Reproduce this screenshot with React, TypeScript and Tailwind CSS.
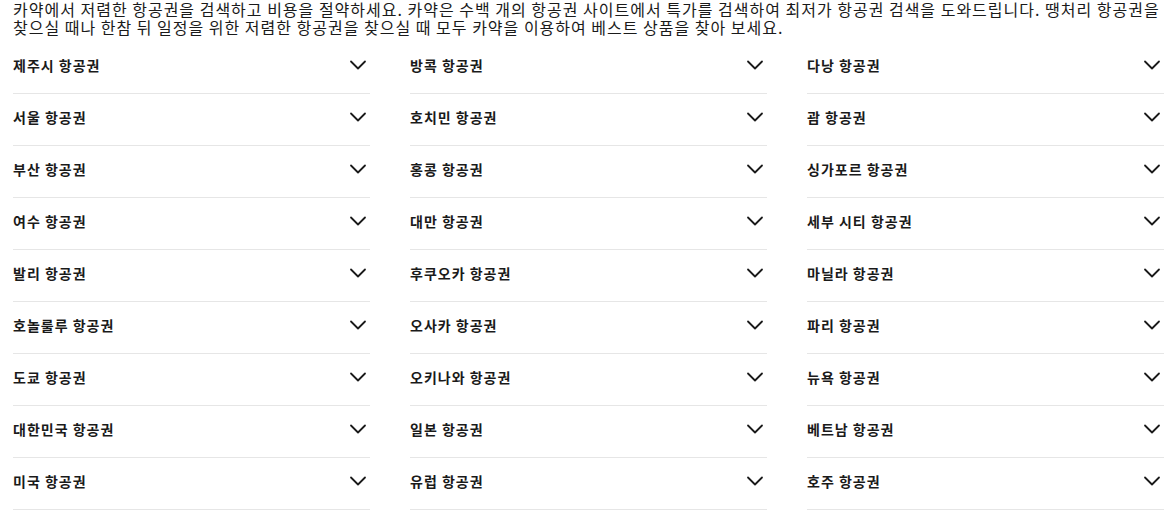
const columns: string[][] = [
  ['제주시 항공권', '서울 항공권', '부산 항공권', '여수 항공권', '발리 항공권', '호놀룰루 항공권', '도쿄 항공권', '대한민국 항공권', '미국 항공권'],
  ['방콕 항공권', '호치민 항공권', '홍콩 항공권', '대만 항공권', '후쿠오카 항공권', '오사카 항공권', '오키나와 항공권', '일본 항공권', '유럽 항공권'],
  ['다낭 항공권', '괌 항공권', '싱가포르 항공권', '세부 시티 항공권', '마닐라 항공권', '파리 항공권', '뉴욕 항공권', '베트남 항공권', '호주 항공권'],
];

const Chevron = () => (
  <svg width="20" height="12" viewBox="0 0 20 12" fill="none" className="shrink-0">
    <path d="M3 2.5l7 7 7-7" stroke="#1a1a1a" strokeWidth="1.8" strokeLinecap="round" strokeLinejoin="round" />
  </svg>
);

export default function App() {
  return (
    <div
      className="w-[1173px] h-[522px] overflow-hidden bg-white pl-[13px] pr-[10px] text-[#1a1a1a]"
      style={{ fontFamily: '"Noto Sans CJK KR", "Noto Sans", sans-serif' }}
    >
      <p className="text-[16px] leading-[18px] tracking-[1px]">
        카약에서 저렴한 항공권을 검색하고 비용을 절약하세요. 카약은 수백 개의 항공권 사이트에서 특가를 검색하여 최저가 항공권 검색을 도와드립니다. 땡처리 항공권을 찾으실 때나 한참 뒤 일정을 위한 저렴한 항공권을 찾으실 때 모두 카약을 이용하여 베스트 상품을 찾아 보세요.
      </p>
      <div className="mt-[6px] grid grid-cols-3 gap-x-[40px] w-[1151px]">
        {columns.map((col, i) => (
          <div key={i} className="flex flex-col">
            {col.map((label) => (
              <div
                key={label}
                className="h-[52px] flex items-center justify-between border-b border-[#e6e6e6] pr-[2px] pb-[5px]"
              >
                <span className="text-[14px] font-bold leading-[20px] tracking-[1px]">{label}</span>
                <Chevron />
              </div>
            ))}
          </div>
        ))}
      </div>
    </div>
  );
}
